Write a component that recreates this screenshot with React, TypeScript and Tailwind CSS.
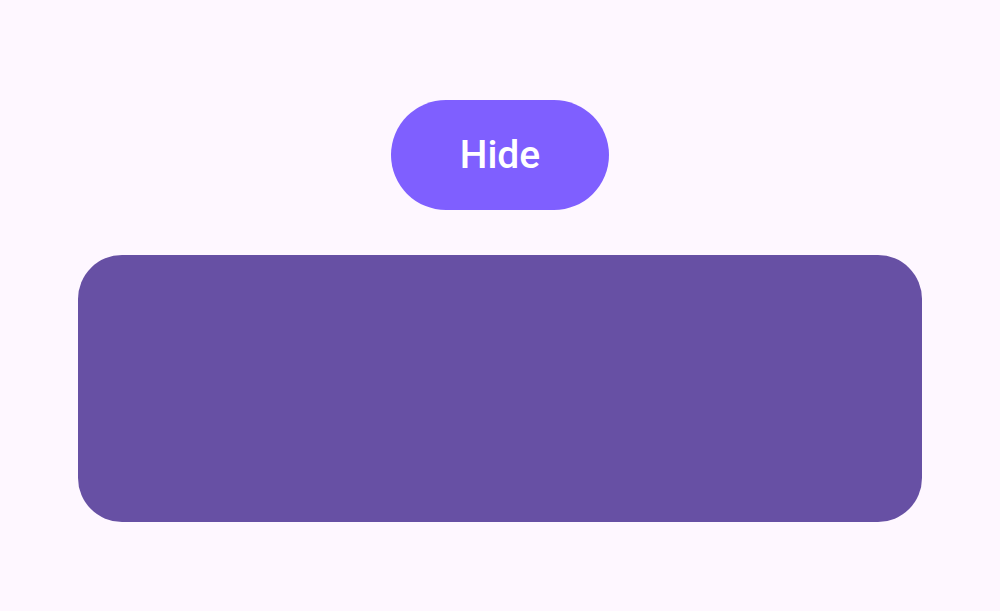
import React, { useState } from "react";

const App: React.FC = () => {
  const [visible, setVisible] = useState(true);

  return (
    <div
      className="w-full min-h-[611px] bg-[#fef7ff] flex flex-col items-center pt-[100px] px-[78px] gap-[45px]"
      style={{ fontFamily: "Roboto, 'Liberation Sans', sans-serif" }}
    >
      {/* Toggle button */}
      <button
        type="button"
        onClick={() => setVisible(!visible)}
        className="w-[218px] h-[110px] rounded-full bg-[#7f5fff] text-white text-[39px] font-medium flex items-center justify-center cursor-pointer"
      >
        {visible ? "Hide" : "Show"}
      </button>

      {/* Box */}
      <div
        className={`w-full h-[267px] rounded-[44px] bg-[#6750a4] ${
          visible ? "" : "invisible"
        }`}
      />
    </div>
  );
};

export default App;
